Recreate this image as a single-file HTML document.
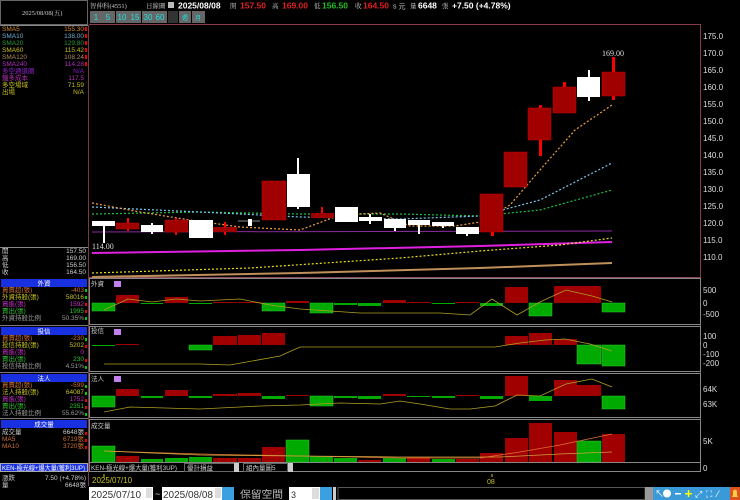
<!DOCTYPE html>
<html><head><meta charset="utf-8"><style>
html,body{margin:0;padding:0;background:#000;width:740px;height:500px;overflow:hidden}
svg text{font-family:"Liberation Sans","Noto Sans CJK TC",sans-serif}
.s{font-family:"Liberation Serif","Noto Serif CJK SC",serif;font-size:6.5px}
.ax{font-family:"Liberation Serif",serif;font-size:8px;fill:#ddd}
</style></head><body>
<svg width="740" height="500" viewBox="0 0 740 500" xmlns="http://www.w3.org/2000/svg">
<rect width="740" height="500" fill="#000"/>
<rect x="0.5" y="0.5" width="87" height="24" fill="#000" stroke="#666"/>
<text x="22" y="15" class="s" fill="#ccc" font-size="7">2025/08/08(五)</text>
<line x1="0" y1="25.5" x2="88" y2="25.5" stroke="#888"/>
<line x1="88.5" y1="25" x2="88.5" y2="500" stroke="#7a3a4a"/>
<g class="s">
<text x="2" y="31" fill="#d08a2a">SMA5</text><text x="84" y="31" text-anchor="end" fill="#d08a2a">155.30</text>
<text x="2" y="38" fill="#6ab0d0">SMA10</text><text x="84" y="38" text-anchor="end" fill="#6ab0d0">138.00</text>
<text x="2" y="45" fill="#2a9a3a">SMA20</text><text x="84" y="45" text-anchor="end" fill="#2a9a3a">129.80</text>
<text x="2" y="52" fill="#c8c020">SMA60</text><text x="84" y="52" text-anchor="end" fill="#c8c020">115.42</text>
<text x="2" y="59" fill="#b08a60">SMA120</text><text x="84" y="59" text-anchor="end" fill="#b08a60">108.24</text>
<text x="2" y="66" fill="#b030c0">SMA240</text><text x="84" y="66" text-anchor="end" fill="#b030c0">114.28</text>
<text x="2" y="73" fill="#8a20c0">多空通道圈</text><text x="84" y="73" text-anchor="end" fill="#8a20c0">N/A</text>
<text x="2" y="80" fill="#b030b0">鐵多成本</text><text x="84" y="80" text-anchor="end" fill="#b030b0">117.5</text>
<text x="2" y="87" fill="#c8c020">多空場域</text><text x="84" y="87" text-anchor="end" fill="#c8c020">71.59</text>
<text x="2" y="94" fill="#c8c020">出場</text><text x="84" y="94" text-anchor="end" fill="#c8c020">N/A</text>
</g>
<g fill="#e00"><rect x="85" y="27" width="2" height="4"/><rect x="85" y="34" width="2" height="4"/><rect x="85" y="41" width="2" height="4"/><rect x="85" y="48" width="2" height="4"/><rect x="85" y="55" width="2" height="4"/><rect x="85" y="62" width="2" height="4"/></g>
<line x1="0" y1="247.5" x2="88" y2="247.5" stroke="#888"/>
<g class="s" fill="#ccc">
<text x="2" y="253">開</text><text x="86" y="253" text-anchor="end">157.50</text>
<text x="2" y="260">高</text><text x="86" y="260" text-anchor="end">169.00</text>
<text x="2" y="267">低</text><text x="86" y="267" text-anchor="end">156.50</text>
<text x="2" y="274">收</text><text x="86" y="274" text-anchor="end">164.50</text>
</g>
<g class="s">
<rect x="1" y="279" width="86" height="8" fill="#1830e0"/><text x="44" y="285.5" text-anchor="middle" fill="#fff">外資</text>
<text x="2" y="292" fill="#d07030">買賣超(張)</text><text x="84" y="292" text-anchor="end" fill="#d07030">-403</text>
<text x="2" y="299" fill="#c8c020">外資持股(張)</text><text x="84" y="299" text-anchor="end" fill="#c8c020">58016</text>
<text x="2" y="306" fill="#c030c0">買進(張)</text><text x="84" y="306" text-anchor="end" fill="#c030c0">1592</text>
<text x="2" y="313" fill="#30c030">賣出(張)</text><text x="84" y="313" text-anchor="end" fill="#30c030">1995</text>
<text x="2" y="320" fill="#999">外資持股比例</text><text x="84" y="320" text-anchor="end" fill="#999">50.35%</text>
<line x1="0" y1="325.5" x2="88" y2="325.5" stroke="#777"/>
<rect x="1" y="327" width="86" height="8" fill="#1830e0"/><text x="44" y="333.5" text-anchor="middle" fill="#fff">投信</text>
<text x="2" y="340" fill="#d07030">買賣超(張)</text><text x="84" y="340" text-anchor="end" fill="#d07030">-230</text>
<text x="2" y="347" fill="#c8c020">投信持股(張)</text><text x="84" y="347" text-anchor="end" fill="#c8c020">5202</text>
<text x="2" y="354" fill="#c030c0">買進(張)</text><text x="84" y="354" text-anchor="end" fill="#c030c0">0</text>
<text x="2" y="361" fill="#30c030">賣出(張)</text><text x="84" y="361" text-anchor="end" fill="#30c030">230</text>
<text x="2" y="368" fill="#999">投信持股比例</text><text x="84" y="368" text-anchor="end" fill="#999">4.51%</text>
<line x1="0" y1="372.5" x2="88" y2="372.5" stroke="#777"/>
<rect x="1" y="374" width="86" height="8" fill="#1830e0"/><text x="44" y="380.5" text-anchor="middle" fill="#fff">法人</text>
<text x="2" y="387" fill="#d07030">買賣超(張)</text><text x="84" y="387" text-anchor="end" fill="#d07030">-599</text>
<text x="2" y="394" fill="#c8c020">法人持股(張)</text><text x="84" y="394" text-anchor="end" fill="#c8c020">64087</text>
<text x="2" y="401" fill="#c030c0">買進(張)</text><text x="84" y="401" text-anchor="end" fill="#c030c0">1752</text>
<text x="2" y="408" fill="#30c030">賣出(張)</text><text x="84" y="408" text-anchor="end" fill="#30c030">2351</text>
<text x="2" y="415" fill="#999">法人持股比例</text><text x="84" y="415" text-anchor="end" fill="#999">55.62%</text>
<line x1="0" y1="418.5" x2="88" y2="418.5" stroke="#777"/>
<rect x="1" y="420" width="86" height="8" fill="#1830e0"/><text x="44" y="426.5" text-anchor="middle" fill="#fff">成交量</text>
<text x="2" y="434" fill="#ccc">成交量</text><text x="84" y="434" text-anchor="end" fill="#ccc">6648張</text>
<text x="2" y="441" fill="#d07030">MA5</text><text x="84" y="441" text-anchor="end" fill="#d07030">6719張</text>
<text x="2" y="448" fill="#d07030">MA10</text><text x="84" y="448" text-anchor="end" fill="#d07030">3720張</text>
<rect x="0.5" y="463.5" width="87" height="8" fill="#1830e0" stroke="#aaa"/><text x="2" y="470" fill="#fff" textLength="83" lengthAdjust="spacingAndGlyphs">KEN-極光線+爆大量(獲利3UP)</text>
<text x="2" y="480" fill="#ccc">漲跌</text><text x="86" y="480" text-anchor="end" fill="#ccc">7.50 (+4.78%)</text>
<text x="2" y="487" fill="#ccc">量</text><text x="86" y="487" text-anchor="end" fill="#ccc">6648張</text>
</g>
<g fill="#0c0"><rect x="85" y="289" width="2" height="3"/><rect x="85" y="296" width="2" height="3"/><rect x="85" y="317" width="2" height="3"/><rect x="85" y="338" width="2" height="3"/><rect x="85" y="366" width="2" height="3"/><rect x="85" y="385" width="2" height="3"/><rect x="85" y="392" width="2" height="3"/><rect x="85" y="413" width="2" height="3"/></g>
<g fill="#e00"><rect x="85" y="303" width="2" height="3"/><rect x="85" y="310" width="2" height="3"/><rect x="85" y="345" width="2" height="3"/><rect x="85" y="359" width="2" height="3"/><rect x="85" y="399" width="2" height="3"/><rect x="85" y="406" width="2" height="3"/><rect x="85" y="432" width="2" height="3"/><rect x="85" y="439" width="2" height="3"/><rect x="85" y="446" width="2" height="3"/></g>

<text x="90" y="8" class="s" fill="#ccc" font-size="7">智伸科(4551)</text>
<text x="146" y="8" class="s" fill="#ccc" font-size="7">日線圖</text>
<rect x="168" y="2" width="6" height="6" fill="#bbb"/>
<text x="178" y="8.5" font-size="8.5" font-weight="bold" fill="#fff">2025/08/08</text>
<text x="230" y="8" class="s" fill="#ccc" font-size="7">開</text><text x="240" y="8.5" font-size="8.5" font-weight="bold" fill="#e02020">157.50</text>
<text x="272" y="8" class="s" fill="#ccc" font-size="7">高</text><text x="282" y="8.5" font-size="8.5" font-weight="bold" fill="#e02020">169.00</text>
<text x="314" y="8" class="s" fill="#ccc" font-size="7">低</text><text x="322" y="8.5" font-size="8.5" font-weight="bold" fill="#20c020">156.50</text>
<text x="355" y="8" class="s" fill="#ccc" font-size="7">收</text><text x="363" y="8.5" font-size="8.5" font-weight="bold" fill="#e02020">164.50</text>
<text x="393" y="8.5" font-size="7" fill="#ccc">s 元</text>
<text x="410" y="8" class="s" fill="#ccc" font-size="7">量</text><text x="418" y="8.5" font-size="8.5" font-weight="bold" fill="#fff">6648</text>
<text x="442" y="8" class="s" fill="#ccc" font-size="7">張</text>
<text x="452" y="8.5" font-size="8.5" font-weight="bold" fill="#fff">+7.50 (+4.78%)</text>
<g font-size="8" fill="#1ee0e0" font-family="Liberation Serif,serif">
<rect x="90" y="11" width="12" height="12" fill="#666"/><text x="96" y="20" text-anchor="middle">1</text>
<rect x="102" y="11" width="13" height="12" fill="#666"/><text x="108" y="20" text-anchor="middle">5</text>
<rect x="116" y="11" width="13" height="12" fill="#666"/><text x="122" y="20" text-anchor="middle">10</text>
<rect x="129" y="11" width="12" height="12" fill="#666"/><text x="135" y="20" text-anchor="middle">15</text>
<rect x="142" y="11" width="12" height="12" fill="#666"/><text x="148" y="20" text-anchor="middle">30</text>
<rect x="154" y="11" width="13" height="12" fill="#666"/><text x="160" y="20" text-anchor="middle">60</text>
<rect x="168" y="11" width="10" height="12" fill="#333"/>
<rect x="179" y="11" width="12" height="12" fill="#666"/><text x="185" y="20" text-anchor="middle" font-size="6">週</text>
<rect x="192" y="11" width="13" height="12" fill="#666"/><text x="198" y="20" text-anchor="middle" font-size="6">月</text>
</g>

<line x1="89" y1="24.5" x2="700" y2="24.5" stroke="#8a3a4a"/>
<line x1="700.5" y1="24" x2="700.5" y2="462" stroke="#8a3a4a"/>
<line x1="89" y1="277.5" x2="700" y2="277.5" stroke="#8a4a5a"/>
<g class="ax">
<text x="703" y="39">175.0</text><text x="703" y="56">170.0</text><text x="703" y="73">165.0</text><text x="703" y="90">160.0</text><text x="703" y="107">155.0</text><text x="703" y="124">150.0</text><text x="703" y="141">145.0</text><text x="703" y="158">140.0</text><text x="703" y="175">135.0</text><text x="703" y="192">130.0</text><text x="703" y="209">125.0</text><text x="703" y="226">120.0</text><text x="703" y="243">115.0</text><text x="703" y="260">110.0</text>
</g>
<line x1="92" y1="232" x2="612" y2="231" stroke="#8a2aa0" stroke-width="1"/>
<polyline points="92,253 300,250 480,246 612,242" fill="none" stroke="#e020e0" stroke-width="2"/>
<polyline points="92,277 300,273 480,268 612,263" fill="none" stroke="#c0905a" stroke-width="2"/>
<polyline points="92,273 250,268 400,258 480,251 560,245 612,238" fill="none" stroke="#e8e020" stroke-width="1.2" stroke-dasharray="2,2"/>
<polyline points="92,214 200,212 300,214 400,214 480,216 540,210 612,190" fill="none" stroke="#20c040" stroke-width="1.2" stroke-dasharray="2,2"/>
<polyline points="92,207 200,212 300,217 400,219 480,216 540,200 612,163" fill="none" stroke="#7ac8f0" stroke-width="1.2" stroke-dasharray="2,2"/>
<polyline points="92,203 140,212 190,220 240,227 300,230 340,215 380,213 410,226 455,226 480,222 510,205 540,170 575,130 612,105" fill="none" stroke="#f0a040" stroke-width="1.2" stroke-dasharray="2,2"/>
<g>
<rect x="103" y="222" width="2" height="21" fill="#fff"/><rect x="92" y="221" width="23" height="5" fill="#fff"/>
<rect x="127" y="218" width="2" height="13" fill="#f00"/><rect x="116" y="223" width="23" height="6" fill="#a00000" stroke="#c00" stroke-width=".5"/>
<rect x="151" y="223" width="2" height="11" fill="#fff"/><rect x="141" y="225" width="22" height="7" fill="#fff"/>
<rect x="175" y="218" width="2" height="17" fill="#f00"/><rect x="165" y="220" width="23" height="12" fill="#a00000" stroke="#c00" stroke-width=".5"/>
<rect x="189" y="220" width="24" height="18" fill="#fff"/>
<rect x="224" y="222" width="2" height="13" fill="#f00"/><rect x="213" y="227" width="24" height="5" fill="#a00000"/>
<line x1="238" y1="221" x2="260" y2="221" stroke="#888"/><rect x="248" y="219" width="4" height="7" fill="#fff"/>
<rect x="262" y="181" width="24" height="39" fill="#a00000" stroke="#c00" stroke-width=".5"/>
<rect x="297" y="158" width="2" height="51" fill="#fff"/><rect x="287" y="174" width="23" height="33" fill="#fff"/>
<rect x="321" y="207" width="2" height="11" fill="#f00"/><rect x="311" y="213" width="23" height="5" fill="#a00000"/>
<rect x="335" y="207" width="23" height="15" fill="#fff"/>
<rect x="369" y="214" width="2" height="10" fill="#fff"/><rect x="359" y="217" width="23" height="4" fill="#fff"/>
<rect x="394" y="219" width="2" height="12" fill="#fff"/><rect x="384" y="219" width="22" height="9" fill="#fff"/>
<rect x="418" y="220" width="2" height="14" fill="#fff"/><rect x="408" y="220" width="22" height="5" fill="#fff"/>
<rect x="442" y="222" width="2" height="6" fill="#fff"/><rect x="432" y="222" width="22" height="4" fill="#fff"/>
<rect x="466" y="227" width="2" height="9" fill="#fff"/><rect x="456" y="227" width="23" height="7" fill="#fff"/>
<rect x="491" y="230" width="3" height="6" fill="#f00"/><rect x="480" y="194" width="23" height="38" fill="#a00000" stroke="#c00" stroke-width=".5"/>
<rect x="504" y="152" width="23" height="35" fill="#a00000" stroke="#c00" stroke-width=".5"/>
<rect x="539" y="105" width="3" height="51" fill="#f00"/><rect x="528" y="108" width="23" height="32" fill="#a00000" stroke="#c00" stroke-width=".5"/>
<rect x="563" y="82" width="3" height="8" fill="#f00"/><rect x="553" y="87" width="23" height="26" fill="#a00000" stroke="#c00" stroke-width=".5"/>
<rect x="588" y="70" width="2" height="31" fill="#fff"/><rect x="577" y="77" width="23" height="20" fill="#fff"/>
<rect x="612" y="57" width="3" height="43" fill="#f00"/><rect x="602" y="72" width="23" height="24" fill="#a00000" stroke="#c00" stroke-width=".5"/>
</g>
<text x="602" y="56" class="ax" font-size="7.5">169.00</text>
<text x="92" y="249" class="ax" font-size="7.5" fill="#fff">114.00</text>

<g fill="none" stroke="#888">
<rect x="89.5" y="278.5" width="611" height="46"/>
<rect x="89.5" y="326.5" width="611" height="45"/>
<rect x="89.5" y="373.5" width="611" height="44"/>
<rect x="89.5" y="419.5" width="611" height="43"/>
<rect x="89.5" y="462.5" width="611" height="9"/>
</g>
<g class="s" fill="#ccc">
<text x="91" y="286">外資</text><rect x="114" y="281" width="7" height="6" fill="#c080f0"/>
<text x="91" y="333">投信</text><rect x="114" y="329" width="7" height="6" fill="#c080f0"/>
<text x="91" y="381">法人</text><rect x="114" y="376" width="7" height="6" fill="#c080f0"/>
<text x="91" y="428">成交量</text>
</g>
<g class="ax">
<text x="703" y="293">500</text><text x="703" y="306">0</text><text x="703" y="317">-500</text>
<text x="703" y="339">100</text><text x="703" y="348">0</text><text x="703" y="357">-100</text><text x="703" y="366">-200</text>
<text x="703" y="392">64K</text><text x="703" y="407">63K</text>
<text x="703" y="444">5K</text><text x="703" y="471">0</text>
</g>
<g stroke-width=".5">
<rect x="92" y="303" width="23" height="8" fill="#0a0" stroke="#3c3"/>
<rect x="116" y="295" width="23" height="8" fill="#a00000"/>
<rect x="141" y="303" width="22" height="1" fill="#0a0"/>
<rect x="165" y="297" width="23" height="6" fill="#a00000"/>
<rect x="189" y="303" width="23" height="1" fill="#0a0"/>
<rect x="213" y="302" width="24" height="1" fill="#a00000"/>
<rect x="238" y="302" width="23" height="1" fill="#a00000"/>
<rect x="262" y="303" width="23" height="8" fill="#0a0" stroke="#3c3"/>
<rect x="286" y="301" width="23" height="2" fill="#a00000"/>
<rect x="310" y="303" width="23" height="10" fill="#0a0" stroke="#3c3"/>
<rect x="334" y="303" width="23" height="2" fill="#0a0"/>
<rect x="358" y="303" width="23" height="3" fill="#0a0"/>
<rect x="383" y="300" width="23" height="3" fill="#a00000"/>
<rect x="407" y="302" width="23" height="1" fill="#a00000"/>
<rect x="432" y="303" width="23" height="1" fill="#0a0"/>
<rect x="456" y="302" width="23" height="1" fill="#a00000"/>
<rect x="480" y="303" width="23" height="3" fill="#0a0"/>
<rect x="505" y="287" width="23" height="16" fill="#a00000"/>
<rect x="529" y="303" width="23" height="13" fill="#0a0" stroke="#3c3"/>
<rect x="554" y="286" width="23" height="17" fill="#a00000"/>
<rect x="577" y="286" width="24" height="17" fill="#a00000"/>
<rect x="602" y="303" width="23" height="9" fill="#0a0" stroke="#3c3"/>
</g>
<polyline points="104,310 128,299 152,302 176,299 200,301 240,299 270,305 300,309 330,311 360,313 400,313 440,313 470,315 492,299 517,315 540,302 566,290 592,296 612,302" fill="none" stroke="#b0a020" stroke-width=".8"/>
<g>
<rect x="92" y="345" width="23" height="1" fill="#0a0"/>
<rect x="116" y="344" width="23" height="1" fill="#a00000"/>
<rect x="189" y="345" width="23" height="5" fill="#0a0" stroke="#3c3" stroke-width=".5"/>
<rect x="213" y="336" width="24" height="9" fill="#a00000"/>
<rect x="238" y="335" width="23" height="10" fill="#a00000"/>
<rect x="262" y="333" width="23" height="12" fill="#a00000"/>
<rect x="505" y="336" width="23" height="9" fill="#a00000"/>
<rect x="529" y="333" width="23" height="12" fill="#a00000"/>
<rect x="554" y="339" width="23" height="6" fill="#a00000"/>
<rect x="577" y="345" width="24" height="19" fill="#0a0" stroke="#3c3" stroke-width=".5"/>
<rect x="602" y="345" width="23" height="21" fill="#0a0" stroke="#3c3" stroke-width=".5"/>
</g>
<polyline points="104,364 200,364 230,365 280,356 300,347 360,347 420,347 495,347 520,343 545,340 565,339 590,344 612,351" fill="none" stroke="#b0a020" stroke-width=".8"/>
<g>
<rect x="92" y="396" width="23" height="11" fill="#0a0" stroke="#3c3" stroke-width=".5"/>
<rect x="116" y="389" width="23" height="7" fill="#a00000"/>
<rect x="141" y="396" width="22" height="2" fill="#0a0"/>
<rect x="165" y="390" width="23" height="6" fill="#a00000"/>
<rect x="189" y="396" width="23" height="2" fill="#0a0"/>
<rect x="213" y="394" width="24" height="2" fill="#a00000"/>
<rect x="238" y="393" width="23" height="3" fill="#a00000"/>
<rect x="262" y="396" width="23" height="3" fill="#0a0"/>
<rect x="286" y="395" width="23" height="1" fill="#a00000"/>
<rect x="310" y="396" width="23" height="10" fill="#0a0" stroke="#3c3" stroke-width=".5"/>
<rect x="334" y="396" width="23" height="2" fill="#0a0"/>
<rect x="358" y="396" width="23" height="3" fill="#0a0"/>
<rect x="383" y="394" width="23" height="2" fill="#a00000"/>
<rect x="407" y="396" width="23" height="1" fill="#0a0"/>
<rect x="432" y="396" width="23" height="2" fill="#0a0"/>
<rect x="456" y="395" width="23" height="1" fill="#a00000"/>
<rect x="480" y="396" width="23" height="3" fill="#0a0"/>
<rect x="505" y="376" width="23" height="20" fill="#a00000"/>
<rect x="529" y="396" width="23" height="5" fill="#0a0"/>
<rect x="554" y="380" width="23" height="16" fill="#a00000"/>
<rect x="577" y="385" width="24" height="11" fill="#a00000"/>
<rect x="602" y="396" width="23" height="13" fill="#0a0" stroke="#3c3" stroke-width=".5"/>
</g>
<polyline points="104,412 130,407 200,409 260,406 300,405 340,403 380,404 400,401 420,404 450,409 470,409 495,406 517,395 540,396 566,384 592,379 612,387" fill="none" stroke="#b0a020" stroke-width=".8"/>
<g>
<rect x="92" y="446" width="23" height="16" fill="#0a0" stroke="#3c3" stroke-width=".5"/>
<rect x="116" y="456" width="23" height="6" fill="#a00000"/>
<rect x="141" y="459" width="22" height="3" fill="#0a0"/>
<rect x="165" y="458" width="23" height="4" fill="#0a0"/>
<rect x="189" y="457" width="23" height="5" fill="#0a0"/>
<rect x="213" y="458" width="24" height="4" fill="#a00000"/>
<rect x="238" y="458" width="23" height="4" fill="#a00000"/>
<rect x="262" y="447" width="23" height="15" fill="#a00000"/>
<rect x="286" y="440" width="23" height="22" fill="#0a0" stroke="#3c3" stroke-width=".5"/>
<rect x="310" y="456" width="23" height="6" fill="#0a0"/>
<rect x="334" y="458" width="23" height="4" fill="#0a0"/>
<rect x="358" y="460" width="23" height="2" fill="#a00000"/>
<rect x="383" y="458" width="23" height="4" fill="#0a0"/>
<rect x="407" y="457" width="23" height="5" fill="#a00000"/>
<rect x="432" y="459" width="23" height="3" fill="#0a0"/>
<rect x="456" y="459" width="23" height="3" fill="#a00000"/>
<rect x="480" y="453" width="23" height="9" fill="#a00000"/>
<rect x="505" y="438" width="23" height="24" fill="#a00000"/>
<rect x="529" y="423" width="23" height="39" fill="#a00000"/>
<rect x="554" y="432" width="23" height="30" fill="#a00000"/>
<rect x="577" y="441" width="24" height="21" fill="#0a0" stroke="#3c3" stroke-width=".5"/>
<rect x="602" y="434" width="23" height="28" fill="#a00000"/>
</g>
<polyline points="104,451 200,454 300,456 400,458 480,458 520,452 560,445 612,434" fill="none" stroke="#e07030" stroke-width=".8"/>
<polyline points="104,451 200,455 300,456 400,457 500,457 560,454 612,452" fill="none" stroke="#d0a040" stroke-width=".8"/>
<g class="s" fill="#ccc">
<text x="91" y="470" textLength="86" lengthAdjust="spacingAndGlyphs">KEN-極光線+爆大量(獲利3UP)</text>
<rect x="184.5" y="463.5" width="50" height="8" fill="none" stroke="#666"/><text x="187" y="470">優計損益</text>
<rect x="234" y="463" width="5" height="9" fill="#ccc"/>
<rect x="243.5" y="463.5" width="44" height="8" fill="none" stroke="#666"/><text x="246" y="470">組內量圖5</text>
<rect x="288" y="463" width="5" height="9" fill="#ccc"/>
</g>
<line x1="104" y1="474" x2="104" y2="477" stroke="#cc2"/>
<line x1="492" y1="474" x2="492" y2="477" stroke="#cc2"/>
<text x="92" y="483" font-size="8" fill="#c8c020">2025/07/10</text>
<text x="487" y="484" font-size="7" fill="#c8c020">08</text>
<rect x="88" y="486" width="652" height="14" fill="#000"/>
<rect x="89" y="487" width="64" height="13" fill="#fff"/><text x="91" y="498" font-family="Liberation Serif,serif" font-size="10" fill="#333">2025/07/10</text>
<rect x="146" y="488" width="6" height="10" fill="#ddd"/>
<text x="155" y="497" font-size="9" fill="#ccc">~</text>
<rect x="162" y="487" width="60" height="13" fill="#fff"/><text x="163" y="498" font-family="Liberation Serif,serif" font-size="10" fill="#333" textLength="50" lengthAdjust="spacingAndGlyphs">2025/08/08</text>
<rect x="215" y="488" width="6" height="10" fill="#ddd"/>
<rect x="222" y="487" width="12" height="13" fill="#3aa0e0"/>
<text x="240" y="498" font-family="Liberation Serif,Noto Serif CJK SC,serif" font-size="10" fill="#bbb" textLength="43" lengthAdjust="spacingAndGlyphs">保留空間</text>
<rect x="289" y="487" width="31" height="13" fill="#fff"/><text x="291" y="498" font-size="9" fill="#333">3</text>
<rect x="312" y="488" width="7" height="11" fill="#ddd"/>
<rect x="320" y="487" width="12" height="13" fill="#3aa0e0"/>
<rect x="333" y="487" width="3" height="13" fill="#ccc"/>
<rect x="338" y="487.5" width="307" height="12" fill="#000" stroke="#555"/>
<rect x="645" y="487" width="8" height="13" fill="#999"/>
<rect x="653" y="487" width="77" height="13" fill="#3a9ad8"/>
<g fill="#fff" font-size="9">
<text x="655" y="497">↖</text><circle cx="667" cy="493.5" r="4"/><rect x="675" y="493" width="6" height="1.5"/>
<rect x="685" y="493" width="7" height="1.5" fill="#ff0"/><rect x="687.8" y="490" width="1.5" height="7" fill="#ff0"/>
<text x="695" y="497">⤢</text><text x="706" y="497">⛶</text><text x="717" y="497">⁄</text>
</g>
<rect x="730" y="487" width="10" height="13" fill="#e05020"/><path d="M732 497 L738 497 L737 495 L737 491 Q735 488 733 491 L733 495 Z" fill="#ffd040"/>
</svg>
</body></html>
